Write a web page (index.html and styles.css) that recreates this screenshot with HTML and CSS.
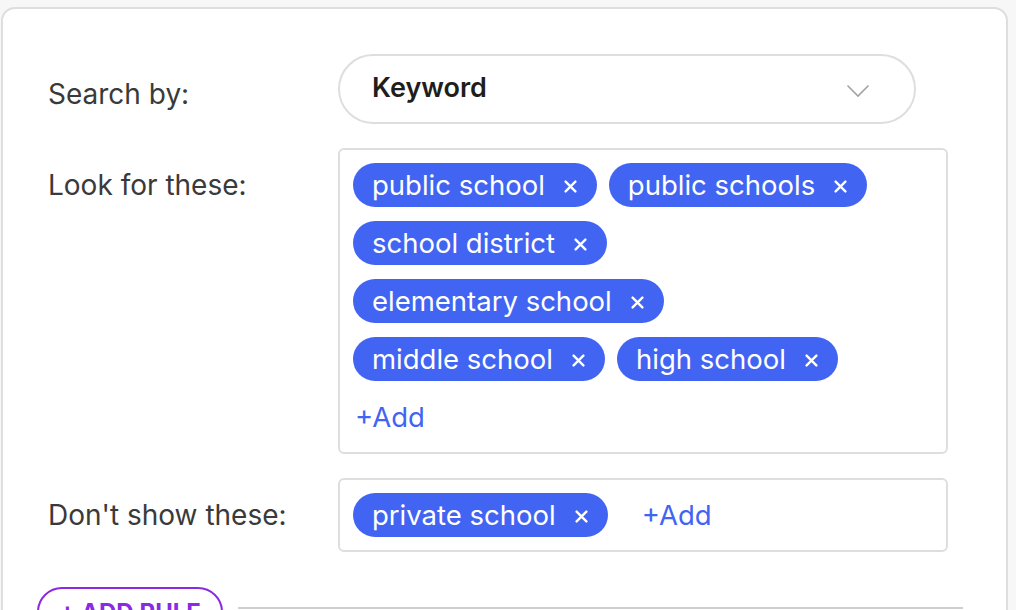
FILE: index.html
```html
<!DOCTYPE html>
<html>
<head>
<meta charset="utf-8">
<link rel="stylesheet" href="styles.css">
</head>
<body>
<div class="card">
  <div class="row row-select">
    <div class="label">Search by:</div>
    <div class="select">
      <span class="select-value">Keyword</span>
      <svg class="chev" width="24" height="14" viewBox="0 0 24 14"><path d="M1.5 1.5 L12 12 L22.5 1.5" fill="none" stroke="#a3a3a3" stroke-width="1.6"/></svg>
    </div>
  </div>
  <div class="row">
    <div class="label label-top">Look for these:</div>
    <div class="box">
      <div class="line">
        <span class="chip">public school<svg class="x" viewBox="0 0 12 12"><path d="M1.5 1.5 L10.5 10.5 M10.5 1.5 L1.5 10.5" stroke="#fff" stroke-width="2.2" stroke-linecap="round"/></svg></span>
        <span class="chip">public schools<svg class="x" viewBox="0 0 12 12"><path d="M1.5 1.5 L10.5 10.5 M10.5 1.5 L1.5 10.5" stroke="#fff" stroke-width="2.2" stroke-linecap="round"/></svg></span>
      </div>
      <div class="line">
        <span class="chip">school district<svg class="x" viewBox="0 0 12 12"><path d="M1.5 1.5 L10.5 10.5 M10.5 1.5 L1.5 10.5" stroke="#fff" stroke-width="2.2" stroke-linecap="round"/></svg></span>
      </div>
      <div class="line">
        <span class="chip">elementary school<svg class="x" viewBox="0 0 12 12"><path d="M1.5 1.5 L10.5 10.5 M10.5 1.5 L1.5 10.5" stroke="#fff" stroke-width="2.2" stroke-linecap="round"/></svg></span>
      </div>
      <div class="line">
        <span class="chip">middle school<svg class="x" viewBox="0 0 12 12"><path d="M1.5 1.5 L10.5 10.5 M10.5 1.5 L1.5 10.5" stroke="#fff" stroke-width="2.2" stroke-linecap="round"/></svg></span>
        <span class="chip">high school<svg class="x" viewBox="0 0 12 12"><path d="M1.5 1.5 L10.5 10.5 M10.5 1.5 L1.5 10.5" stroke="#fff" stroke-width="2.2" stroke-linecap="round"/></svg></span>
      </div>
      <div class="line">
        <span class="add">+Add</span>
      </div>
    </div>
  </div>
  <div class="row">
    <div class="label label-top">Don't show these:</div>
    <div class="box">
      <div class="line">
        <span class="chip">private school<svg class="x" viewBox="0 0 12 12"><path d="M1.5 1.5 L10.5 10.5 M10.5 1.5 L1.5 10.5" stroke="#fff" stroke-width="2.2" stroke-linecap="round"/></svg></span>
        <span class="add add-inline">+Add</span>
      </div>
    </div>
  </div>
  <div class="footer">
    <button class="add-rule">+ ADD RULE</button>
    <div class="divider"></div>
  </div>
</div>
</body>
</html>
```
FILE: styles.css
```css
* { box-sizing: border-box; }
html, body { margin: 0; padding: 0; }
body {
  background: #f7f7f7;
  font-family: Inter, "Noto Sans", sans-serif;
  width: 1016px;
  height: 610px;
  overflow: hidden;
}
.card {
  margin: 7px 0 0 1px;
  width: 1007px;
  height: 640px;
  background: #fff;
  border: 2px solid #dedede;
  border-radius: 14px;
  padding: 45px 0 0 45px;
}
.row {
  display: flex;
  align-items: flex-start;
  margin-bottom: 24px;
}
.row-select { align-items: center; }
.label {
  width: 290px;
  flex: none;
  font-size: 28px;
  color: #3a3a3a;
  line-height: 34px;
}
.row-select .label { padding-top: 10px; }
.label-top { padding-top: 20px; }
.select {
  width: 578px;
  height: 70px;
  border: 2px solid #dedede;
  border-radius: 35px;
  display: flex;
  align-items: center;
  justify-content: space-between;
  padding: 0 44px 0 32px;
}
.select-value {
  font-size: 27px;
  font-weight: 600;
  color: #1e1e1e;
  margin-top: -4px;
}
.chev { margin-top: 4px; }
.box {
  width: 610px;
  border: 2px solid #dedede;
  border-radius: 6px;
  padding: 13px 13px;
  display: flex;
  flex-direction: column;
  row-gap: 14px;
}
.line {
  display: flex;
  column-gap: 12px;
  align-items: center;
}
.chip {
  height: 44px;
  border-radius: 22px;
  background: #4264f2;
  color: #fff;
  font-size: 27.5px;
  display: inline-flex;
  align-items: center;
  padding: 0 20px 0 19px;
  line-height: 44px;
}
.x {
  width: 13px;
  height: 13px;
  margin-left: 19px;
  margin-top: 2px;
}
.add {
  font-size: 27.5px;
  color: #4264f2;
  height: 44px;
  line-height: 44px;
  padding-left: 2px;
}
.add-inline { margin-left: 20px; }
.footer {
  display: flex;
  align-items: flex-end;
  margin-left: -11px;
  margin-top: 35px;
}
.add-rule {
  width: 186px;
  height: 50px;
  border: 2px solid #8a2be2;
  border-radius: 25px;
  background: #fff;
  color: #8a2be2;
  font-family: Inter, sans-serif;
  font-weight: 700;
  font-size: 24px;
  padding: 0;
  flex: none;
}
.divider {
  width: 725px;
  height: 2px;
  background: #cfcfcf;
  margin-left: 15px;
  margin-bottom: 28px;
}
```
